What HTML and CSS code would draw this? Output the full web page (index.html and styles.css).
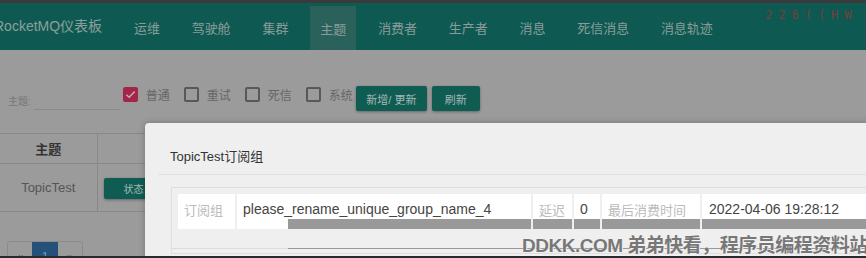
FILE: index.html
```html
<!DOCTYPE html>
<html lang="zh">
<head>
<meta charset="utf-8">
<title>RocketMQ仪表板</title>
<link rel="stylesheet" href="styles.css">
</head>
<body>
<div class="topstrip"></div>
<nav class="nav">
  <div class="brand">RocketMQ仪表板</div>
  <ul class="menu">
    <li>运维</li>
    <li>驾驶舱</li>
    <li>集群</li>
    <li class="active">主题</li>
    <li>消费者</li>
    <li>生产者</li>
    <li>消息</li>
    <li>死信消息</li>
    <li>消息轨迹</li>
  </ul>
  <div class="lang">226((HW</div>
</nav>

<main class="page">
  <div class="filters">
    <label class="search"><span class="search-label">主题:</span><span class="search-input"></span></label>
    <span class="check on"><span class="box"><svg viewBox="0 0 16 16" width="15" height="15"><path d="M3.5 8.2 L6.6 11 L12.5 4.8" fill="none" stroke="#c9a9b2" stroke-width="1.6"/></svg></span>普通</span>
    <span class="check"><span class="box"></span>重试</span>
    <span class="check"><span class="box"></span>死信</span>
    <span class="check last"><span class="box"></span>系统</span>
    <button class="btn wide">新增/ 更新</button>
    <button class="btn">刷新</button>
  </div>

  <table class="grid">
    <thead><tr><th class="c1">主题</th><th></th></tr></thead>
    <tbody><tr><td class="c1">TopicTest</td><td><button class="btn small">状态</button></td></tr></tbody>
  </table>

  <div class="pager"><span>«</span><span class="cur">1</span><span>»</span></div>
</main>

<div class="modal">
  <div class="modal-head">TopicTest订阅组</div>
  <div class="panel">
    <table class="kv">
      <tr>
        <td class="k w1">订阅组</td>
        <td class="v w2 band-mid">please_rename_unique_group_name_4</td>
        <td class="k w3">延迟</td>
        <td class="v w4">0</td>
        <td class="k w5">最后消费时间</td>
        <td class="v w6">2022-04-06 19:28:12</td>
      </tr>
    </table>
    <div class="panel-next"></div>
  </div>
</div>

<div class="watermark">DDKK.COM 弟弟快看，程序员编程资料站</div>
<div class="bottomstrip"></div>
</body>
</html>
```

FILE: styles.css
```css
* { box-sizing: border-box; }
html, body { margin: 0; padding: 0; }
body {
  width: 866px;
  height: 258px;
  overflow: hidden;
  background: #9b9b9b;
  font-family: "Liberation Sans", "Noto Sans CJK SC", sans-serif;
  color: #555;
  position: relative;
}
.topstrip { height: 3px; background: #3a3a3a; }
.nav {
  height: 47px;
  background: #0e5a52;
  display: flex;
  align-items: stretch;
  position: relative;
}
.brand {
  font-size: 14px;
  color: #8c9f9c;
  line-height: 47px;
  margin-left: -6px;
  width: 124px;
  white-space: nowrap;
}
.menu {
  list-style: none;
  margin: 0; padding: 0;
  display: flex;
}
.menu li {
  font-size: 13px;
  color: #8a9c99;
  padding: 0 10px;
  margin: 0 6px;
  display: flex;
  align-items: center;
  padding-top: 2px;
  letter-spacing: -0.1px;
}
.menu li.active { background: #2a625b; margin-top: 3px; padding-top: 0; }
.lang {
  position: absolute;
  left: 765px;
  top: 5px;
  color: #a4312f;
  font-size: 12px;
  letter-spacing: 6px;
  opacity: 0.7;
  font-family: "DejaVu Sans Mono", monospace;
}

.filters {
  display: flex;
  align-items: flex-end;
  margin-top: 36px;
  height: 25px;
}
.search { display: flex; align-items: flex-end; margin-left: 8px; margin-bottom: 1px; }
.search-label { font-size: 10px; color: #777; line-height: 12px; margin-bottom: 2px; }
.search-input { width: 86px; border-bottom: 1px solid #8a8a8a; height: 10px; margin-left: 3px; }
.check {
  display: flex;
  align-items: center;
  font-size: 12px;
  color: #666;
  margin-bottom: 8px;
  margin-right: 14px;
}
.search + .check { margin-left: 3px; }
.check .box {
  width: 15px; height: 15px;
  border: 2px solid #585858;
  border-radius: 2px;
  margin-right: 8px;
  display: flex;
}
.check.on .box { background: #a3264a; border-color: #a3264a; }
.check.on .box svg { margin: -2px; }
.check.last { margin-right: 3px; }
.btn {
  border: none;
  background: #0f5c53;
  color: #a6b7b4;
  font-family: "Liberation Sans", "Noto Sans CJK SC", sans-serif;
  font-size: 11px;
  height: 25px;
  border-radius: 2px;
  box-shadow: 0 1px 3px rgba(0,0,0,0.35);
  padding: 0;
}
.btn.wide { width: 71px; margin-right: 5px; }
.btn:not(.wide):not(.small) { width: 48px; }

.grid {
  margin-top: 22px;
  border-collapse: collapse;
  width: 866px;
}
.grid th, .grid td {
  border-top: 1px solid #888;
  border-bottom: 1px solid #888;
  border-right: 1px solid #888;
}
.grid th { height: 30px; font-size: 13px; color: #333; font-weight: bold; }
.grid td { height: 48px; font-size: 13px; color: #555; }
.grid .c1 { width: 97px; text-align: center; }
.grid td + td { padding-left: 6px; }
.btn.small { width: 60px; height: 21px; font-size: 10px; margin-top: 2px; }

.pager {
  margin-top: 29px;
  margin-left: 7px;
  display: flex;
  border: 1px solid #8a8a8a;
  border-radius: 3px;
  width: 76px;
  height: 30px;
}
.pager span {
  width: 25px;
  text-align: center;
  font-size: 12px;
  color: #666;
  padding-top: 8px;
}
.pager .cur { background: #24507a; color: #7f98b1; width: 26px; }

.modal {
  position: absolute;
  left: 145px;
  top: 123px;
  width: 820px;
  height: 200px;
  background: #efefef;
  border-radius: 4px;
  box-shadow: 0 0 6px rgba(0,0,0,0.25);
}
.modal-head {
  height: 52px;
  margin-left: 13px;
  border-bottom: 1px solid #e2e2e2;
  padding-left: 12px;
  padding-top: 23px;
  font-size: 13px;
  color: #333;
}
.panel {
  margin-top: 12px;
  margin-left: 26px;
  border: 1px solid #dedede;
  padding: 4px;
  padding-right: 0;
}
.kv { border-spacing: 2px; border-collapse: separate; table-layout: fixed; width: 754px; }
.kv td {
  background: #fff;
  height: 35px;
  font-size: 13px;
  padding: 0 6px 5px;
  position: relative;
  white-space: nowrap;
}
.kv td::after {
  content: "";
  position: absolute;
  left: 0; right: 0; bottom: 0;
  height: 10px;
  background: #999;
}
.kv td.w1::after { display: none; }
.kv td.band-mid::after { left: 51px; }
.kv .k { color: #bbb; }
.kv .v { color: #444; font-size: 14px; }
.kv td.w6 { padding-left: 7px; }
.w1 { width: 57px; }
.w2 { width: 294px; }
.w3 { width: 39px; }
.w4 { width: 26px; }
.w5 { width: 98px; }
.w6 { width: 226px; }
.panel-next {
  height: 18px;
  margin-left: -4px;
  border-bottom: 1px solid #dcdcdc;
  position: relative;
}
.panel-next::after {
  content: "";
  position: absolute;
  left: 116px; right: 0; bottom: -1px;
  height: 1px;
  background: #999;
}

.watermark {
  position: absolute;
  left: 522px;
  top: 235px;
  font-size: 19px;
  line-height: 22px;
  font-weight: bold;
  color: #777;
  letter-spacing: -0.5px;
  white-space: nowrap;
  text-shadow: 0 0 1px #fff, 1px 1px 0 #eee;
  font-family: "Liberation Sans", "Noto Sans CJK SC", sans-serif;
}
.bottomstrip {
  position: absolute;
  left: 0; right: 0; bottom: 0;
  height: 2px;
  background: #2a2a2a;
}
```
